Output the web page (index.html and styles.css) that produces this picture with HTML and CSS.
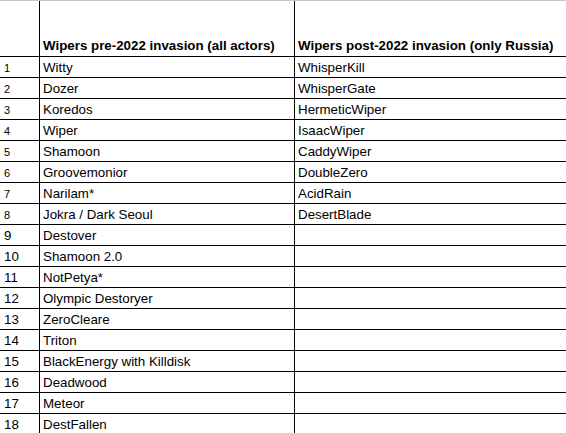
FILE: index.html
```html
<!DOCTYPE html>
<html>
<head>
<meta charset="utf-8">
<link rel="stylesheet" href="styles.css">
</head>
<body>
<div class="sheet">
<table class="grid">
<colgroup><col class="c0"><col class="c1"><col class="c2"></colgroup>
<tr class="head"><td class="num"></td><td>Wipers pre-2022 invasion (all actors)</td><td>Wipers post-2022 invasion (only Russia)</td></tr>
<tr><td class="num small">1</td><td>Witty</td><td>WhisperKill</td></tr>
<tr><td class="num small">2</td><td>Dozer</td><td>WhisperGate</td></tr>
<tr><td class="num small">3</td><td>Koredos</td><td>HermeticWiper</td></tr>
<tr><td class="num small">4</td><td>Wiper</td><td>IsaacWiper</td></tr>
<tr><td class="num small">5</td><td>Shamoon</td><td>CaddyWiper</td></tr>
<tr><td class="num small">6</td><td>Groovemonior</td><td>DoubleZero</td></tr>
<tr><td class="num small">7</td><td>Narilam*</td><td>AcidRain</td></tr>
<tr><td class="num small">8</td><td>Jokra / Dark Seoul</td><td>DesertBlade</td></tr>
<tr><td class="num">9</td><td>Destover</td><td></td></tr>
<tr><td class="num">10</td><td>Shamoon 2.0</td><td></td></tr>
<tr><td class="num">11</td><td>NotPetya*</td><td></td></tr>
<tr><td class="num">12</td><td>Olympic Destoryer</td><td></td></tr>
<tr><td class="num">13</td><td>ZeroCleare</td><td></td></tr>
<tr><td class="num">14</td><td>Triton</td><td></td></tr>
<tr><td class="num">15</td><td>BlackEnergy with Killdisk</td><td></td></tr>
<tr><td class="num">16</td><td>Deadwood</td><td></td></tr>
<tr><td class="num">17</td><td>Meteor</td><td></td></tr>
<tr><td class="num">18</td><td>DestFallen</td><td></td></tr>
</table>
</div>
</body>
</html>
```

FILE: styles.css
```css
html, body {
  margin: 0;
  padding: 0;
  background: #fff;
  overflow: hidden;
}
.sheet {
  border-top: 1px solid #c6c6c6;
  width: 566px;
  overflow: hidden;
}
.grid {
  border-collapse: separate;
  border-spacing: 0;
  table-layout: fixed;
  width: 700px;
  font-family: "Liberation Sans", Arial, sans-serif;
  font-size: 13.33px;
  color: #000;
}
.c0 { width: 40px; }
.c1 { width: 255px; }
.c2 { width: 405px; }
.grid td {
  box-sizing: border-box;
  height: 21px;
  padding: 0 2px 1px 3px;
  border-bottom: 1px solid #000;
  vertical-align: bottom;
  white-space: nowrap;
  line-height: 16px;
}
.grid td:nth-child(1),
.grid td:nth-child(2) {
  border-right: 1px solid #000;
}
.grid .head td {
  height: 56px;
  font-weight: bold;
  padding-bottom: 2px;
}
.grid td.num {
  padding-left: 4px;
}
.grid td.small {
  font-size: 11px;
}
```
